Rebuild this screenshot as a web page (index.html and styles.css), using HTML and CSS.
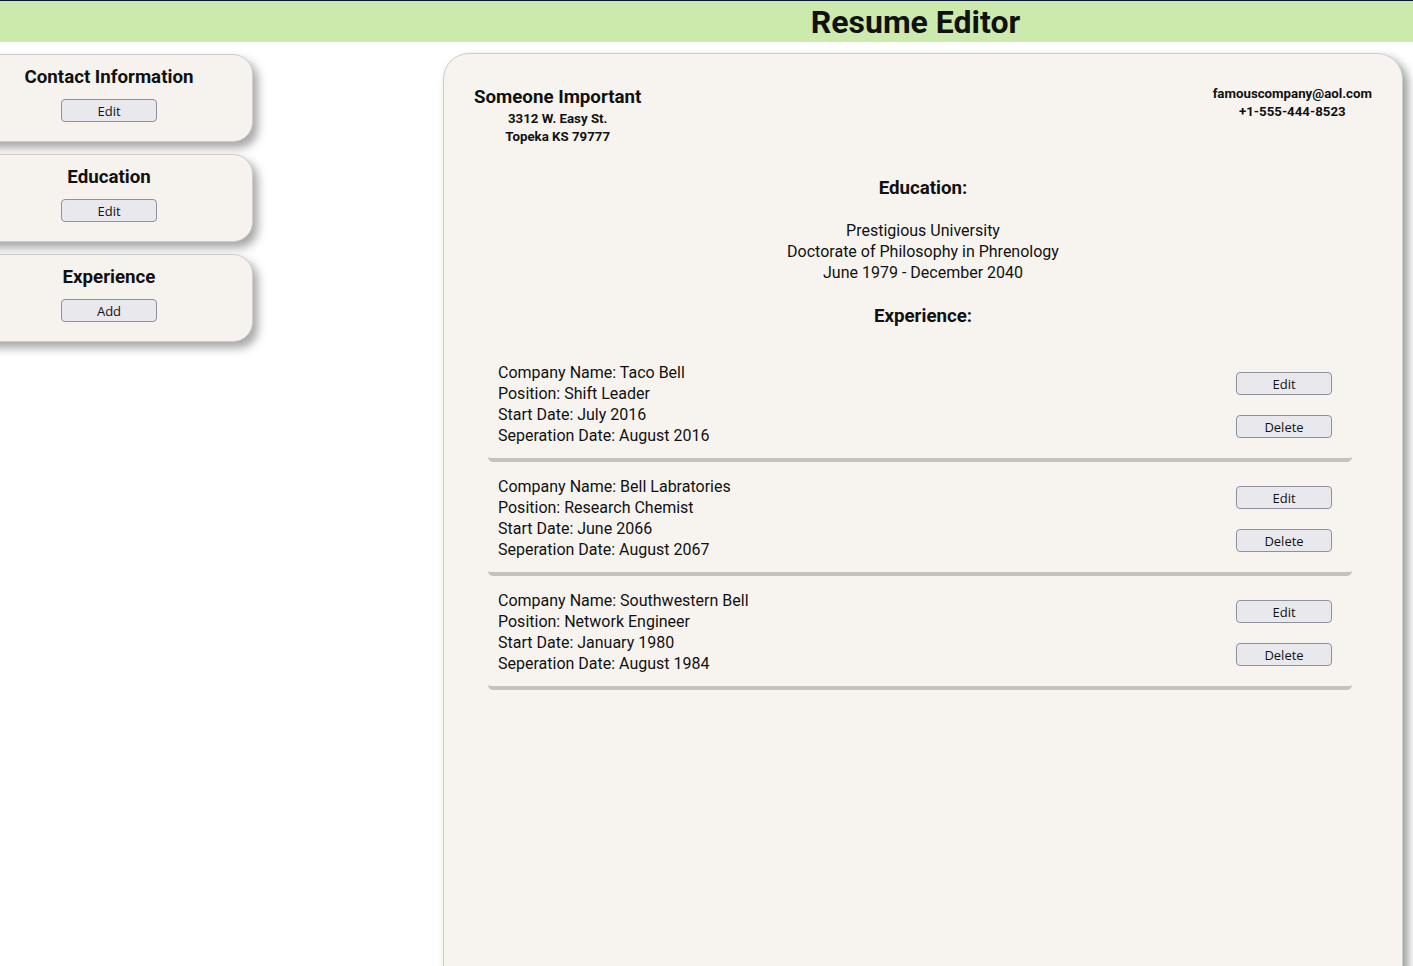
FILE: index.html
```html
<!DOCTYPE html>
<html>
<head>
<meta charset="utf-8">
<link rel="stylesheet" href="styles.css">
</head>
<body>
<header class="topbar"><h1 class="title">Resume Editor</h1></header>
<div class="layout">
  <aside class="sidebar">
    <section class="card"><h2 class="card-title">Contact Information</h2><button class="btn">Edit</button></section>
    <section class="card"><h2 class="card-title">Education</h2><button class="btn">Edit</button></section>
    <section class="card"><h2 class="card-title">Experience</h2><button class="btn">Add</button></section>
  </aside>
  <main class="resume">
    <div class="contact">
      <div class="who">
        <div class="name">Someone Important</div>
        <div class="address">3312 W. Easy St.<br>Topeka KS 79777</div>
      </div>
      <div class="reach">famouscompany@aol.com<br>+1-555-444-8523</div>
    </div>
    <h3 class="section-title edu-title">Education:</h3>
    <div class="edu">Prestigious University<br>Doctorate of Philosophy in Phrenology<br>June 1979 - December 2040</div>
    <h3 class="section-title exp-title">Experience:</h3>
    <div class="jobs">
      <div class="job">
        <div class="job-text">Company Name: Taco Bell<br>Position: Shift Leader<br>Start Date: July 2016<br>Seperation Date: August 2016</div>
        <div class="job-actions"><button class="btn">Edit</button><button class="btn">Delete</button></div>
      </div>
      <div class="job">
        <div class="job-text">Company Name: Bell Labratories<br>Position: Research Chemist<br>Start Date: June 2066<br>Seperation Date: August 2067</div>
        <div class="job-actions"><button class="btn">Edit</button><button class="btn">Delete</button></div>
      </div>
      <div class="job">
        <div class="job-text">Company Name: Southwestern Bell<br>Position: Network Engineer<br>Start Date: January 1980<br>Seperation Date: August 1984</div>
        <div class="job-actions"><button class="btn">Edit</button><button class="btn">Delete</button></div>
      </div>
    </div>
  </main>
</div>
</body>
</html>
```
FILE: styles.css
```css
html, body {
  margin: 0;
  padding: 0;
  background: #ffffff;
  font-family: Roboto, "Liberation Sans", sans-serif;
  color: #111111;
  overflow: hidden;
}
.topbar {
  border-top: 1px solid #0b1736;
  background: #cdeaad;
  height: 41px;
  padding-left: 418px;
  box-sizing: content-box;
}
.title {
  margin: 0;
  text-align: center;
  font-size: 32px;
  font-weight: 700;
  line-height: 43px;
}
.layout {
  display: flex;
  align-items: flex-start;
  padding-top: 11px;
}
.sidebar {
  width: 288px;
  margin-left: -35px;
  flex: none;
  display: flex;
  flex-direction: column;
  gap: 12px;
  padding-top: 1px;
}
.card {
  height: 88px;
  box-sizing: border-box;
  background: #f6f3ef;
  border: 1px solid #cfcccb;
  border-radius: 20px;
  box-shadow: 5px 6px 10px rgba(0, 0, 0, 0.35);
  display: flex;
  flex-direction: column;
  align-items: center;
  padding-top: 12px;
}
.card-title {
  margin: 0;
  font-size: 18.72px;
  font-weight: 700;
  line-height: 21px;
}
.btn {
  margin-top: 11px;
  width: 96px;
  height: 23px;
  box-sizing: border-box;
  background: #e9e9ed;
  border: 1px solid #8f8f9d;
  border-radius: 4px;
  font-family: "Open Sans", "Noto Sans", sans-serif;
  font-size: 13px;
  color: #111;
  padding: 0;
  line-height: 20px;
}
.resume {
  margin-left: 190px;
  width: 960px;
  height: 960px;
  flex: none;
  box-sizing: border-box;
  background: #f7f4f0;
  border: 1px solid #cfcccb;
  border-radius: 26px;
  box-shadow: 5px 5px 10px rgba(0, 0, 0, 0.4);
  padding: 30px 30px 0 30px;
}
.contact {
  display: flex;
  justify-content: space-between;
  align-items: flex-start;
}
.who {
  display: flex;
  flex-direction: column;
  align-items: center;
  padding-top: 3px;
}
.name {
  font-size: 18.72px;
  font-weight: 700;
  line-height: 21px;
}
.address {
  margin-top: 2px;
  font-size: 13.28px;
  font-weight: 700;
  line-height: 18px;
  text-align: center;
}
.reach {
  padding-top: 1px;
  font-size: 13.28px;
  font-weight: 700;
  line-height: 18px;
  text-align: center;
}
.section-title {
  margin: 0;
  text-align: center;
  font-size: 18.72px;
  font-weight: 700;
  line-height: 21px;
}
.edu-title {
  margin-top: 32px;
}
.edu {
  margin-top: 21px;
  text-align: center;
  font-size: 16px;
  line-height: 21px;
}
.exp-title {
  margin-top: 23px;
}
.jobs {
  margin: 25px 20px 0 14px;
  display: flex;
  flex-direction: column;
  gap: 4px;
}
.job {
  display: flex;
  justify-content: space-between;
  align-items: stretch;
  padding: 10px 20px 12px 10px;
  border-bottom: 4px solid #c4c2bd;
  border-radius: 5px;
}
.job-text {
  font-size: 16px;
  line-height: 21px;
}
.job-actions {
  display: flex;
  flex-direction: column;
  justify-content: center;
  gap: 20px;
  padding-top: 2px;
}
.job-actions .btn {
  margin-top: 0;
}
```
